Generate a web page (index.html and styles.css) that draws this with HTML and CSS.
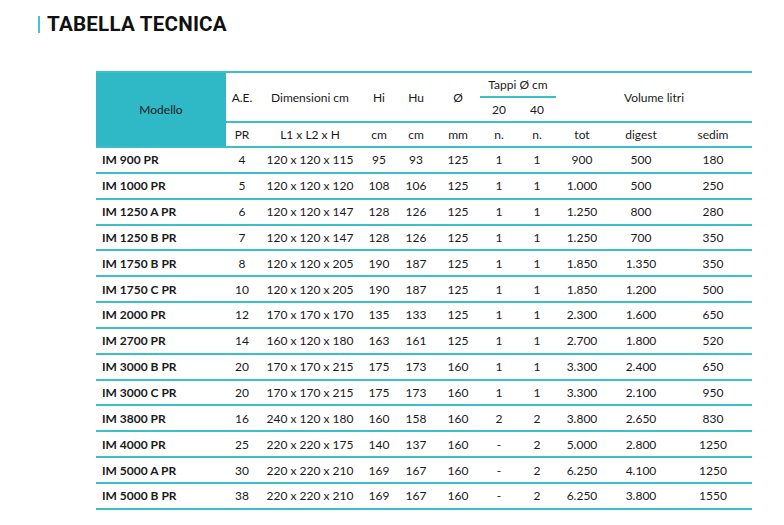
FILE: index.html
```html
<!DOCTYPE html>
<html lang="it">
<head>
<meta charset="utf-8">
<title>Tabella tecnica</title>
<link rel="stylesheet" href="styles.css">
</head>
<body>
<h1 class="title">TABELLA TECNICA</h1>
<table class="spec">
  <colgroup>
    <col class="c-model"><col class="c-ae"><col class="c-dim"><col class="c-hi"><col class="c-hu"><col class="c-d"><col class="c-t20"><col class="c-t40"><col class="c-tot"><col class="c-dig"><col class="c-sed">
  </colgroup>
  <thead>
    <tr class="ha">
      <th class="model-h" rowspan="3">Modello</th>
      <th rowspan="2">A.E.</th>
      <th rowspan="2">Dimensioni cm</th>
      <th rowspan="2">Hi</th>
      <th rowspan="2">Hu</th>
      <th rowspan="2">Ø</th>
      <th class="tappi" colspan="2">Tappi Ø cm</th>
      <th rowspan="2" colspan="3">Volume litri</th>
    </tr>
    <tr class="hb">
      <th>20</th>
      <th>40</th>
    </tr>
    <tr class="hc">
      <th>PR</th>
      <th>L1 x L2 x H</th>
      <th>cm</th>
      <th>cm</th>
      <th>mm</th>
      <th>n.</th>
      <th>n.</th>
      <th>tot</th>
      <th>digest</th>
      <th>sedim</th>
    </tr>
  </thead>
  <tbody>
    <tr><td>IM 900 PR</td><td>4</td><td>120 x 120 x 115</td><td>95</td><td>93</td><td>125</td><td>1</td><td>1</td><td>900</td><td>500</td><td>180</td></tr>
    <tr><td>IM 1000 PR</td><td>5</td><td>120 x 120 x 120</td><td>108</td><td>106</td><td>125</td><td>1</td><td>1</td><td>1.000</td><td>500</td><td>250</td></tr>
    <tr><td>IM 1250 A PR</td><td>6</td><td>120 x 120 x 147</td><td>128</td><td>126</td><td>125</td><td>1</td><td>1</td><td>1.250</td><td>800</td><td>280</td></tr>
    <tr><td>IM 1250 B PR</td><td>7</td><td>120 x 120 x 147</td><td>128</td><td>126</td><td>125</td><td>1</td><td>1</td><td>1.250</td><td>700</td><td>350</td></tr>
    <tr><td>IM 1750 B PR</td><td>8</td><td>120 x 120 x 205</td><td>190</td><td>187</td><td>125</td><td>1</td><td>1</td><td>1.850</td><td>1.350</td><td>350</td></tr>
    <tr><td>IM 1750 C PR</td><td>10</td><td>120 x 120 x 205</td><td>190</td><td>187</td><td>125</td><td>1</td><td>1</td><td>1.850</td><td>1.200</td><td>500</td></tr>
    <tr><td>IM 2000 PR</td><td>12</td><td>170 x 170 x 170</td><td>135</td><td>133</td><td>125</td><td>1</td><td>1</td><td>2.300</td><td>1.600</td><td>650</td></tr>
    <tr><td>IM 2700 PR</td><td>14</td><td>160 x 120 x 180</td><td>163</td><td>161</td><td>125</td><td>1</td><td>1</td><td>2.700</td><td>1.800</td><td>520</td></tr>
    <tr><td>IM 3000 B PR</td><td>20</td><td>170 x 170 x 215</td><td>175</td><td>173</td><td>160</td><td>1</td><td>1</td><td>3.300</td><td>2.400</td><td>650</td></tr>
    <tr><td>IM 3000 C PR</td><td>20</td><td>170 x 170 x 215</td><td>175</td><td>173</td><td>160</td><td>1</td><td>1</td><td>3.300</td><td>2.100</td><td>950</td></tr>
    <tr><td>IM 3800 PR</td><td>16</td><td>240 x 120 x 180</td><td>160</td><td>158</td><td>160</td><td>2</td><td>2</td><td>3.800</td><td>2.650</td><td>830</td></tr>
    <tr><td>IM 4000 PR</td><td>25</td><td>220 x 220 x 175</td><td>140</td><td>137</td><td>160</td><td>-</td><td>2</td><td>5.000</td><td>2.800</td><td>1250</td></tr>
    <tr><td>IM 5000 A PR</td><td>30</td><td>220 x 220 x 210</td><td>169</td><td>167</td><td>160</td><td>-</td><td>2</td><td>6.250</td><td>4.100</td><td>1250</td></tr>
    <tr><td>IM 5000 B PR</td><td>38</td><td>220 x 220 x 210</td><td>169</td><td>167</td><td>160</td><td>-</td><td>2</td><td>6.250</td><td>3.800</td><td>1550</td></tr>
  </tbody>
</table>
</body>
</html>
```

FILE: styles.css
```css
html, body {
  margin: 0;
  padding: 0;
  background: #ffffff;
}

body {
  font-family: "Lato", "Liberation Sans", sans-serif;
  color: #1a1a1a;
}

.title {
  margin: 16px 0 0 38px;
  padding-left: 7px;
  border-left: 2px solid #45c3d0;
  font-family: "Roboto", "Liberation Sans", sans-serif;
  font-weight: 700;
  font-size: 20.6px;
  line-height: 17px;
  color: #111111;
  letter-spacing: 0.2px;
}

.spec {
  margin: 38px 0 0 96px;
  width: 656px;
  border-collapse: collapse;
  table-layout: fixed;
  font-size: 12px;
}

.c-model { width: 130px; }
.c-ae { width: 32px; }
.c-dim { width: 104px; }
.c-hi { width: 34px; }
.c-hu { width: 40px; }
.c-d { width: 44px; }
.c-t20 { width: 38px; }
.c-t40 { width: 38px; }
.c-tot { width: 52px; }
.c-dig { width: 66px; }
.c-sed { width: 78px; }

.spec th,
.spec td {
  padding: 0;
  font-weight: 400;
  text-align: center;
  vertical-align: middle;
  white-space: nowrap;
}

.spec .ha th {
  border-top: 2px solid #3dbfcb;
  height: 23px;
}

.spec .hb th {
  height: 23px;
}

.spec .hc th {
  border-top: 2px solid #3dbfcb;
  border-bottom: 2px solid #3dbfcb;
  height: 23px;
}

.spec .model-h {
  background: #2fb8c5;
  border-bottom: 2px solid #3dbfcb;
}

.spec .tappi {
  border-bottom: 2px solid #3dbfcb;
}

.spec td {
  height: 23.85px;
  border-bottom: 2px solid #3dbfcb;
}

.spec td:first-child {
  text-align: left;
  padding-left: 6px;
  font-weight: 700;
}
```
